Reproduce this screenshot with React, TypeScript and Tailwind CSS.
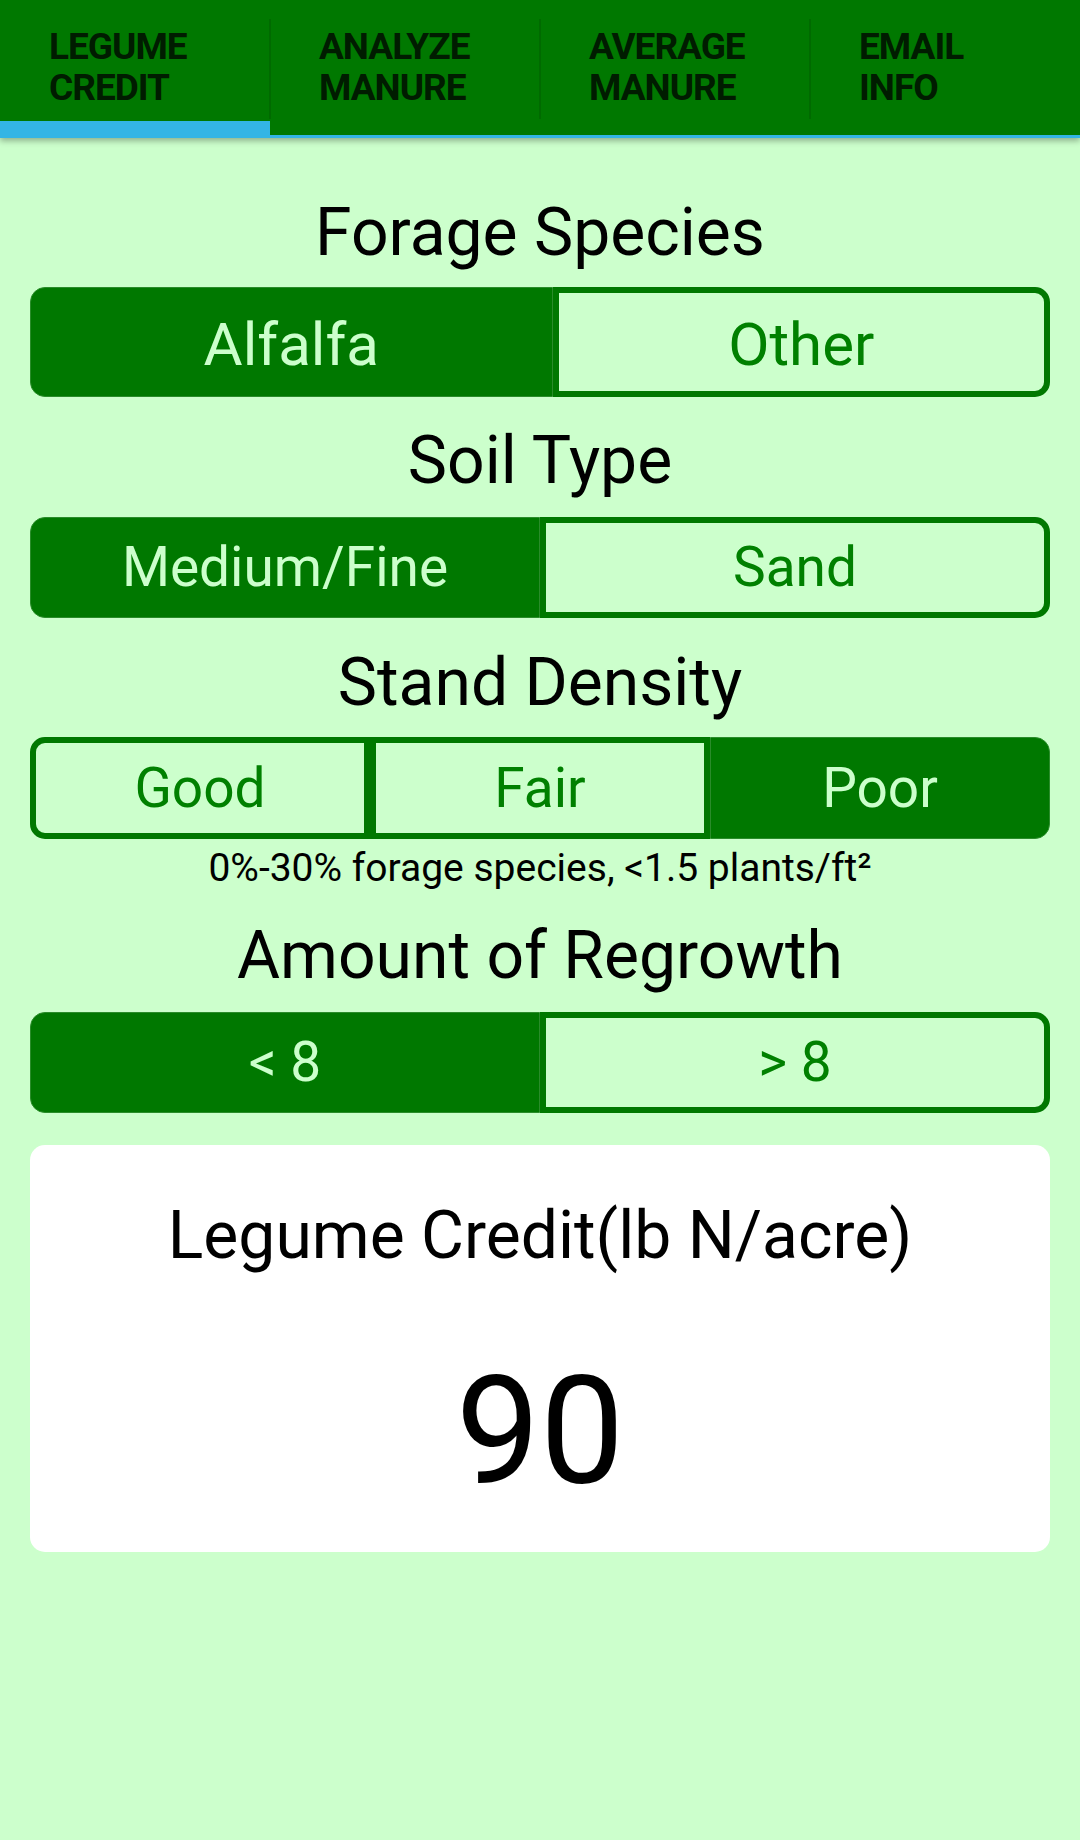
import { useState } from "react";

const tabs = [
  ["LEGUME", "CREDIT"],
  ["ANALYZE", "MANURE"],
  ["AVERAGE", "MANURE"],
  ["EMAIL", "INFO"],
];

function Heading({ text, className }: { text: string; className: string }) {
  return (
    <h2 className={`text-center text-[66px] leading-[77px] text-black ${className}`}>
      {text}
    </h2>
  );
}

function Toggle({
  options,
  selected,
  onSelect,
  cols,
  height,
  textSize,
  className,
}: {
  options: string[];
  selected: number;
  onSelect: (i: number) => void;
  cols: string;
  height: string;
  textSize: string;
  className: string;
}) {
  return (
    <div className={`grid ${cols} ${height} ${className}`}>
      {options.map((opt, i) => {
        const first = i === 0;
        const last = i === options.length - 1;
        const corners = first ? "rounded-l-[15px]" : last ? "rounded-r-[15px]" : "";
        const look =
          i === selected
            ? "bg-[#007800] border border-[#2a8c2a] text-[#ccffcc]"
            : "border-[6px] border-[#007800] text-[#008000]";
        return (
          <button
            key={opt}
            onClick={() => onSelect(i)}
            className={`flex items-center justify-center ${textSize} ${corners} ${look}`}
          >
            {opt}
          </button>
        );
      })}
    </div>
  );
}

export default function App() {
  const [tab, setTab] = useState(0);
  const [species, setSpecies] = useState(0);
  const [soil, setSoil] = useState(0);
  const [density, setDensity] = useState(2);
  const [regrowth, setRegrowth] = useState(0);

  return (
    <div
      className="min-h-[1840px] w-[1080px] bg-[#ccffcc]"
      style={{ fontFamily: "Roboto, 'Noto Sans', sans-serif" }}
    >
      <div className="relative z-10 flex h-[138px] bg-[#007800] shadow-[0_3px_6px_rgba(0,0,0,0.3)]">
        {tabs.map((t, i) => (
          <div
            key={i}
            onClick={() => setTab(i)}
            className="relative flex w-[270px] cursor-pointer flex-col"
          >
            <div className="flex flex-1 flex-col gap-[1px] pl-[49px] pt-[27px] text-[37px] font-bold leading-[40px] tracking-[-1px] text-[#001c00]">
              <span>{t[0]}</span>
              <span>{t[1]}</span>
            </div>
            {i > 0 && (
              <div className="absolute left-[-1px] top-[19px] h-[100px] w-[2px] bg-[#006a00]" />
            )}
            <div className={tab === i ? "h-[17px] bg-[#33b5e5]" : "h-[3px] bg-[#33b5e5]"} />
          </div>
        ))}
      </div>

      <div className="flex flex-col px-[30px]">
        <Heading text="Forage Species" className="mt-[56px]" />
        <Toggle
          options={["Alfalfa", "Other"]}
          selected={species}
          onSelect={setSpecies}
          cols="grid-cols-[522fr_497fr]"
          height="h-[110px]"
          textSize="text-[60px] pt-[6px]"
          className="mt-[16px]"
        />

        <Heading text="Soil Type" className="mt-[25px]" />
        <Toggle
          options={["Medium/Fine", "Sand"]}
          selected={soil}
          onSelect={setSoil}
          cols="grid-cols-2"
          height="h-[101px]"
          textSize="text-[55px]"
          className="mt-[18px]"
        />

        <Heading text="Stand Density" className="mt-[26px]" />
        <Toggle
          options={["Good", "Fair", "Poor"]}
          selected={density}
          onSelect={setDensity}
          cols="grid-cols-3"
          height="h-[102px]"
          textSize="text-[55px]"
          className="mt-[16px]"
        />
        <p className="mt-[6px] text-center text-[39px] leading-[47px] text-black">
          0%-30% forage species, &lt;1.5 plants/ft²
        </p>

        <Heading text="Amount of Regrowth" className="mt-[25px]" />
        <Toggle
          options={["< 8", "> 8"]}
          selected={regrowth}
          onSelect={setRegrowth}
          cols="grid-cols-2"
          height="h-[101px]"
          textSize="text-[55px]"
          className="mt-[18px]"
        />

        <div className="mt-[32px] flex h-[407px] flex-col items-center rounded-[15px] bg-white pt-[52px]">
          <div className="text-[66px] leading-[77px] text-black">Legume Credit(lb N/acre)</div>
          <div className="mt-[70px] text-[150px] leading-[176px] text-black">90</div>
        </div>
      </div>
    </div>
  );
}
